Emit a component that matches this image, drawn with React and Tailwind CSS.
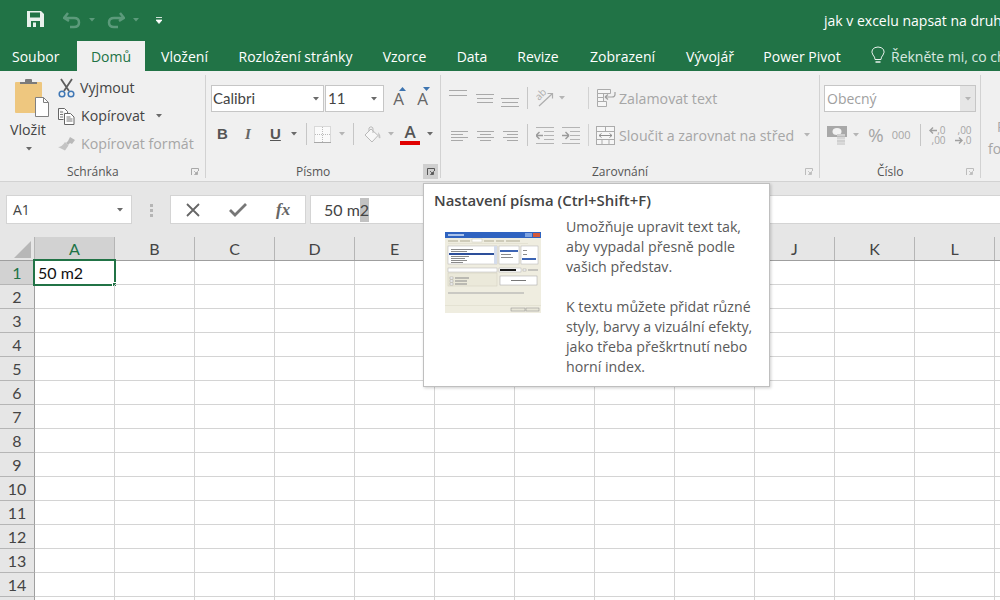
import React from 'react';

const TABS = [
    { label: 'Soubor', w: 'w-[77px]', pl: 'pl-[12px]' },
    { label: 'Domů', w: 'w-[68px]', active: true },
    { label: 'Vložení', w: 'w-[79px]' },
    { label: 'Rozložení stránky', w: 'w-[143px]' },
    { label: 'Vzorce', w: 'w-[75px]' },
    { label: 'Data', w: 'w-[60px]' },
    { label: 'Revize', w: 'w-[72px]' },
    { label: 'Zobrazení', w: 'w-[97px]' },
    { label: 'Vývojář', w: 'w-[78px]' },
    { label: 'Power Pivot', w: 'w-[106px]' },
];

const COLUMNS = ['A', 'B', 'C', 'D', 'E', 'F', 'G', 'H', 'I', 'J', 'K', 'L', 'M'];
const ROWS = [1, 2, 3, 4, 5, 6, 7, 8, 9, 10, 11, 12, 13, 14, 15];

const Caret = ({ color = '#6a6a6a', className = '' }) => (
    <svg width="6" height="4" viewBox="0 0 6 4" className={`shrink-0 ${className}`}>
        <path d="M0 0h6L3 3.5z" fill={color} />
    </svg>
);

const Lines = ({ rows, className = '', color = '#a9a9a9', w = 18 }) => (
    <svg width={w} height="18" viewBox={`0 0 ${w} 18`} className={`shrink-0 ${className}`}>
        {rows.map(([x, y, len], i) => (
            <rect key={i} x={x} y={y} width={len} height="1" fill={color} />
        ))}
    </svg>
);

const Launcher = ({ className = '', color = '#a8a8a8' }) => (
    <svg width="8" height="8" viewBox="0 0 8 8" className={`shrink-0 ${className}`}>
        <path d="M.5 7V.5H7.5V3" fill="none" stroke={color} />
        <path d="M3 3l3 3M6.5 3.5v3h-3z" fill={color} stroke={color} strokeWidth=".8" />
    </svg>
);

const Group = ({ width, label, labelPad, launcher, children }) => (
    <div className={`flex flex-col h-[103px] border-r border-[#d2d2d2] shrink-0 ${width}`}>
        <div className="h-[90px]">{children}</div>
        <div className={`h-[13px] flex items-center text-[12px] text-[#555] ${labelPad}`}>
            <span className="flex-1">{label}</span>
            {launcher}
        </div>
    </div>
);

const PasteIcon = () => (
    <svg width="36" height="40" viewBox="0 0 36 40" className="ml-[14px] mt-[3px] shrink-0">
        <rect x="1" y="4" width="27" height="31" rx="1" fill="#eec77f" />
        <path d="M6 6V4h5V2q0-1 1-1h5q1 0 1 1v2h5v2z" fill="#7b7b7b" />
        <path d="M21.5 19.5h8l5 5v14h-13z" fill="#fff" stroke="#808080" />
        <path d="M29.5 19.5v5h5" fill="none" stroke="#808080" />
    </svg>
);

const ScissorsIcon = () => (
    <svg width="17" height="20" viewBox="0 0 17 20" className="shrink-0">
        <path d="M3 1l8 12M14 1L6 13" stroke="#5d5d5d" strokeWidth="1.8" fill="none" />
        <circle cx="4" cy="16" r="2.8" fill="none" stroke="#3f77b5" strokeWidth="1.5" />
        <circle cx="13" cy="16" r="2.8" fill="none" stroke="#3f77b5" strokeWidth="1.5" />
    </svg>
);

const CopyIcon = () => (
    <svg width="17" height="17" viewBox="0 0 17 17" className="shrink-0">
        <path d="M.5.5h6l3 3v2M.5.5v11h5" fill="#fff" stroke="#666" />
        <path d="M6.5 5.5h6l3.5 3.5v7.5H6.5z" fill="#fff" stroke="#666" />
        <path d="M2 4h3M2 6.5h3M2 9h3M8.5 9h4M8.5 11h6M8.5 13h6" stroke="#777" />
    </svg>
);

const BrushIcon = () => (
    <svg width="18" height="16" viewBox="0 0 18 16" className="shrink-0">
        <path d="M12 1l5 3-3 4-2-1-2 2-2-2 2-2z" fill="#b9b9b9" />
        <path d="M7 6l3.5 3.5L7 14.5 0 11q4 0 7-5z" fill="#c4c4c4" />
    </svg>
);

const GrowFont = ({ up }) => (
    <div className="relative w-[13px] h-[20px] text-[17px] leading-[20px] text-[#666] text-center">
        A
        <svg width="7" height="4" viewBox="0 0 7 4" className="absolute -top-[2px] left-[7px]">
            <path d={up ? 'M0 4h7L3.5 0z' : 'M0 0h7L3.5 4z'} fill="#3d74b0" />
        </svg>
    </div>
);

const BordersIcon = () => (
    <svg width="17" height="17" viewBox="0 0 17 17" className="shrink-0">
        <rect x=".5" y=".5" width="16" height="16" fill="#fafafa" stroke="#bcbcbc" strokeDasharray="1 1" />
        <path d="M8.5 1v15M1 8.5h15" stroke="#bcbcbc" strokeDasharray="1 1" />
        <path d="M0 16.5h17" stroke="#a8a8a8" />
    </svg>
);

const FillIcon = () => (
    <svg width="17" height="17" viewBox="0 0 17 17" className="shrink-0">
        <path d="M1 9L7 3l7 6.500L8 16z" fill="#f7f7f7" stroke="#b9b9b9" />
        <path d="M5 5V2q1-1.500 3-1 1 .5 1 2v4" fill="none" stroke="#b9b9b9" />
        <path d="M14 6q3 3 2.500 6-1.500 1-2-1z" fill="#c4c4c4" />
    </svg>
);

const OrientIcon = () => (
    <svg width="18" height="18" viewBox="0 0 18 18" className="shrink-0">
        <text x="0" y="9" fontSize="10" fill="#aeaeae" transform="rotate(-45 5 7)">ab</text>
        <path d="M3 17L16 5M11.5 4.5h5v5" fill="none" stroke="#aeaeae" strokeWidth="1.2" />
    </svg>
);

const WrapIcon = () => (
    <svg width="19" height="19" viewBox="0 0 19 19" className="shrink-0">
        <path d="M.5.5h13v4h-13zM.5 4.5h6v4h-6zM.5 8.5h6v4h-6zM.5 12.500h9v5h-9z" fill="#f6f6f6" stroke="#ababab" />
        <path d="M8 8h7q3 0 3-2.500V3M8 8l3-2.500M8 8l3 2.500" fill="none" stroke="#a0a0a0" strokeWidth="1.2" />
    </svg>
);

const MergeIcon = () => (
    <svg width="19" height="19" viewBox="0 0 19 19" className="shrink-0">
        <rect x=".5" y=".5" width="18" height="18" fill="#f6f6f6" stroke="#ababab" />
        <path d="M.5 5.5h18M.5 13.5h18M9.5 1v4M6 14v4M13 14v4" stroke="#ababab" />
        <path d="M3 9.5h13M3 9.5l2.500-2M3 9.5l2.500 2M16 9.5l-2.500-2M16 9.5l-2.500 2" stroke="#8f8f8f" fill="none" />
    </svg>
);

const IndentIcon = ({ flip }) => (
    <svg width="18" height="17" viewBox="0 0 18 17" className="shrink-0">
        <path d="M0 .5h18M8 4.5h10M8 8.5h10M8 12.5h10M0 16.5h18" stroke="#b4b4b4" />
        {flip
            ? <path d="M0 8.5h7M7 8.5L3.500 5M7 8.5L3.500 12" stroke="#9a9a9a" strokeWidth="1.4" fill="none" />
            : <path d="M7 8.5H0M0 8.5L3.500 5M0 8.5L3.500 12" stroke="#9a9a9a" strokeWidth="1.4" fill="none" />}
    </svg>
);

const CurrencyIcon = () => (
    <svg width="20" height="19" viewBox="0 0 20 19" className="shrink-0">
        <rect x="0" y="0" width="20" height="11" fill="#a8a8a8" />
        <ellipse cx="10" cy="5.5" rx="4.5" ry="3.5" fill="#f2f2f2" />
        <rect x="10" y="8" width="8" height="2.5" fill="#cfcfcf" />
        <rect x="10" y="11" width="8" height="2.5" fill="#d6d6d6" />
        <rect x="10" y="14" width="8" height="2.5" fill="#cfcfcf" />
        <rect x="10" y="16.5" width="8" height="2.5" fill="#d6d6d6" />
    </svg>
);

const DecimalArrow = ({ left }) => (
    <svg width="8" height="7" viewBox="0 0 8 7" className="shrink-0">
        <path d={left ? 'M8 3.5H1M4 .5l-3 3 3 3' : 'M0 3.5h7M4 .5l3 3-3 3'} fill="none" stroke="#a0a0a0" strokeWidth="1.4" />
    </svg>
);

const DecimalIcon = ({ more }) => (
    <div className="w-[16px] text-[10px] leading-[10px] text-[#a6a6a6]">
        <div className="flex justify-end items-center">{more ? <><DecimalArrow left />,0</> : ',00'}</div>
        <div className="flex justify-end items-center">{more ? ',00' : <><DecimalArrow />,0</>}</div>
    </div>
);

const FontDialogThumb = () => (
    <svg width="96" height="81" viewBox="0 0 96 81" className="shrink-0 blur-[0.4px]">
        <rect width="96" height="81" fill="#efede0" />
        <rect width="96" height="6" fill="#2f63c0" />
        <rect x="3" y="2" width="16" height="2" fill="#a9c2ea" />
        <rect x="88" y="1" width="7" height="4" fill="#d5593b" />
        <rect x="80" y="1" width="7" height="4" fill="#7ea3e0" />
        <rect x="3" y="8" width="10" height="2" fill="#cfccba" />
        <rect x="15" y="8" width="10" height="2" fill="#cfccba" />
        <rect x="27" y="7" width="10" height="3" fill="#fff" stroke="#c8c5b4" strokeWidth=".5" />
        <rect x="39" y="8" width="10" height="2" fill="#cfccba" />
        <rect x="51" y="8" width="8" height="2" fill="#cfccba" />
        <rect x="61" y="8" width="14" height="2" fill="#cfccba" />
        <rect x="3" y="11.5" width="80" height=".5" fill="#d8d6c6" />
        <rect x="3" y="14" width="49" height="18" fill="#fff" stroke="#b0b0b0" strokeWidth=".5" />
        <rect x="4" y="21" width="46" height="2" fill="#2d4f9a" />
        <rect x="6" y="17" width="22" height="1" fill="#8a8a8a" />
        <rect x="6" y="19" width="16" height="1" fill="#8a8a8a" />
        <rect x="6" y="24" width="18" height="1" fill="#8a8a8a" />
        <rect x="6" y="26" width="14" height="1" fill="#8a8a8a" />
        <rect x="6" y="28" width="16" height="1" fill="#8a8a8a" />
        <rect x="6" y="30" width="12" height="1" fill="#8a8a8a" />
        <rect x="49" y="14" width="3" height="18" fill="#d4dcec" />
        <rect x="54" y="14" width="20" height="18" fill="#fff" stroke="#b0b0b0" strokeWidth=".5" />
        <rect x="55" y="18" width="18" height="2" fill="#3c64b4" />
        <rect x="56" y="22" width="10" height="1" fill="#8a8a8a" />
        <rect x="56" y="25" width="12" height="1" fill="#8a8a8a" />
        <rect x="76" y="14" width="17" height="18" fill="#fff" stroke="#b0b0b0" strokeWidth=".5" />
        <rect x="77" y="26" width="14" height="2" fill="#3c64b4" />
        <rect x="78" y="18" width="4" height="1" fill="#8a8a8a" />
        <rect x="78" y="22" width="4" height="1" fill="#8a8a8a" />
        <rect x="3" y="36" width="49" height="4" fill="#fff" stroke="#b0b0b0" strokeWidth=".5" />
        <rect x="54" y="36" width="22" height="4" fill="#fff" stroke="#b0b0b0" strokeWidth=".5" />
        <rect x="55" y="37" width="16" height="2" fill="#1a1a1a" />
        <rect x="78" y="37" width="3" height="2" fill="#fff" stroke="#888" strokeWidth=".4" />
        <rect x="83" y="37.5" width="10" height="1" fill="#999" />
        <rect x="3" y="41" width="49" height="13" fill="#ebe9da" stroke="#d0cebd" strokeWidth=".5" />
        <rect x="5" y="45" width="3" height="2" fill="#fff" stroke="#888" strokeWidth=".4" />
        <rect x="5" y="48" width="3" height="2" fill="#fff" stroke="#888" strokeWidth=".4" />
        <rect x="5" y="51" width="3" height="2" fill="#fff" stroke="#888" strokeWidth=".4" />
        <rect x="10" y="45.5" width="14" height="1" fill="#8a8a8a" />
        <rect x="10" y="48.5" width="12" height="1" fill="#8a8a8a" />
        <rect x="10" y="51.5" width="12" height="1" fill="#8a8a8a" />
        <rect x="55" y="44" width="37" height="9" fill="#fff" stroke="#a0a0a0" strokeWidth=".5" />
        <rect x="66" y="48" width="15" height="1" fill="#777" />
        <rect x="3" y="60.5" width="76" height="1" fill="#a5a5a5" />
        <rect x="0" y="73" width="96" height=".5" fill="#d8d6c6" />
        <rect x="66" y="76" width="14" height="3" fill="#e8e6d8" stroke="#888" strokeWidth=".5" />
        <rect x="81" y="76" width="13" height="3" fill="#e8e6d8" stroke="#888" strokeWidth=".5" />
    </svg>
);

const App = () => {
    return (
        <div className="relative w-[1000px] h-[600px] overflow-hidden bg-white font-['Open_Sans',sans-serif] text-[#444]">
            {/* title bar */}
            <div className="h-[41px] bg-[#217346] flex items-center relative">
                <svg width="17" height="16" viewBox="0 0 17 16" className="ml-[27px] mb-[3px] shrink-0">
                    <path d="M0 0h14l3 3v13H0z" fill="#e8f1ec" />
                    <rect x="3" y="1.5" width="10" height="5" fill="#217346" />
                    <rect x="4" y="10" width="9" height="6" fill="#217346" />
                    <rect x="6" y="11.5" width="3" height="4.5" fill="#e8f1ec" />
                </svg>
                <svg width="18" height="17" viewBox="0 0 18 17" className="ml-[19px] mb-[1px] shrink-0">
                    <path d="M5 1L1 6l5 3M1.5 6H11q5 0 5 4.500T11 15H7" fill="none" stroke="#5c9a7b" strokeWidth="2.5" />
                </svg>
                <Caret color="#5c9a7b" className="ml-[8px] mb-[1px]" />
                <svg width="18" height="17" viewBox="0 0 18 17" className="ml-[12px] mb-[1px] shrink-0">
                    <path d="M13 1l4 5-5 3M16.5 6H7Q2 6 2 10.500T7 15h4" fill="none" stroke="#5c9a7b" strokeWidth="2.5" />
                </svg>
                <Caret color="#5c9a7b" className="ml-[8px] mb-[1px]" />
                <svg width="6" height="7" viewBox="0 0 6 7" className="ml-[17px] shrink-0">
                    <path d="M0 .5h6M0 3h6L3 6.5 0 3z" fill="#fff" stroke="#fff" strokeWidth=".8" />
                </svg>
                <div className="ml-[662px] text-[14px] whitespace-nowrap text-white mb-[1px]">jak v excelu napsat na druhou</div>
            </div>

            {/* tabs */}
            <div className="h-[30px] bg-[#217346] flex text-white text-[14px] whitespace-nowrap">
                {TABS.map((tab) => (
                    <div
                        key={tab.label}
                        className={`${tab.w} shrink-0 flex items-center ${tab.pl ? tab.pl : 'justify-center'} ${tab.active ? 'bg-[#f0f0f0] text-[#217346]' : ''}`}
                    >
                        {tab.label}
                    </div>
                ))}
                <svg width="16" height="20" viewBox="0 0 16 20" className="ml-[15px] mt-[5px] shrink-0">
                    <path d="M5 13.5Q5 11 3 9 1 6 2.5 3.5 4.5 1 8 1t5.500 2.500Q15 6 13 9q-2 2-2 4.500z" fill="none" stroke="#e8f1ec" />
                    <path d="M5.5 16h5" stroke="#e8f1ec" strokeWidth="1.5" />
                </svg>
                <div className="ml-[5px] text-[#d9e8e0] flex items-center">Řekněte mi, co chcete udělat</div>
            </div>

            {/* ribbon */}
            <div className="h-[111px] bg-[#f0f0f0] border-b border-[#d2d2d2] pt-[4px] flex">
                <Group
                    width="w-[206px]"
                    label="Schránka"
                    labelPad="pl-[67px] pr-[6px]"
                    launcher={<Launcher />}
                >
                    <div className="flex">
                        <div className="w-[58px] flex flex-col">
                            <PasteIcon />
                            <div className="text-[14.2px] leading-[20px] ml-[10px] mt-[2px]">Vložit</div>
                            <Caret className="ml-[26px] mt-[7px]" />
                        </div>
                        <div className="flex flex-col -mt-[1px] text-[14.2px] whitespace-nowrap">
                            <div className="h-[28px] flex items-center gap-[5px]"><ScissorsIcon />Vyjmout</div>
                            <div className="h-[28px] flex items-center gap-[6px]"><CopyIcon />Kopírovat<Caret className="ml-[5px]" /></div>
                            <div className="h-[28px] flex items-center gap-[5px] text-[#a6a6a6]"><BrushIcon />Kopírovat formát</div>
                        </div>
                    </div>
                </Group>

                <Group
                    width="w-[235px]"
                    label="Písmo"
                    labelPad="pl-[90px] pr-[2px]"
                    launcher={<div className="w-[15px] h-[15px] bg-[#cfcfcf] flex items-center justify-center"><Launcher color="#555" /></div>}
                >
                    <div className="flex items-center mt-[10px] h-[27px] pl-[5px]">
                        <div className="w-[113px] h-[27px] bg-white border border-[#c6c6c6] flex items-center px-[1px] font-['Lato',sans-serif] text-[15px]">
                            <span className="flex-1">Calibri</span><Caret className="mr-[3px]" />
                        </div>
                        <div className="w-[59px] h-[27px] bg-white border border-[#c6c6c6] ml-[1px] flex items-center px-[2px] font-['Lato',sans-serif] text-[15px]">
                            <span className="flex-1">11</span><Caret className="mr-[4px]" />
                        </div>
                        <div className="ml-[8px]"><GrowFont up /></div>
                        <div className="ml-[11px]"><GrowFont /></div>
                    </div>
                    <div className="flex items-center mt-[10px] h-[24px] text-[#555]">
                        <span className="ml-[11px] w-[11px] font-bold text-[15px] font-['Liberation_Sans',sans-serif]">B</span>
                        <span className="ml-[17px] w-[11px] italic font-bold text-[15px] font-['Liberation_Serif',serif] text-[#666]">I</span>
                        <span className="ml-[14px] w-[12px] font-bold text-[15px] underline font-['Liberation_Sans',sans-serif]">U</span>
                        <Caret className="ml-[9px]" />
                        <div className="ml-[9px] w-px h-[22px] bg-[#c6c6c6]" />
                        <div className="ml-[7px]"><BordersIcon /></div>
                        <Caret color="#b5b5b5" className="ml-[8px]" />
                        <div className="ml-[8px] w-px h-[22px] bg-[#c6c6c6]" />
                        <div className="ml-[10px]"><FillIcon /></div>
                        <Caret color="#b5b5b5" className="ml-[7px]" />
                        <div className="ml-[6px] w-[20px] flex flex-col items-center">
                            <span className="text-[17px] leading-[16px] font-semibold text-[#555]">A</span>
                            <div className="w-[20px] h-[4px] bg-[#e00000] mt-[1px]" />
                        </div>
                        <Caret className="ml-[7px]" />
                    </div>
                </Group>

                <Group
                    width="w-[379px]"
                    label="Zarovnání"
                    labelPad="pl-[151px] pr-[6px]"
                    launcher={<Launcher color="#bcbcbc" />}
                >
                    <div className="flex items-center mt-[11px] h-[24px] text-[#a6a6a6] text-[14.2px] whitespace-nowrap">
                        <Lines className="ml-[8px]" rows={[[0, 1, 18], [0, 6, 18]]} />
                        <Lines className="ml-[9px]" rows={[[0, 5, 18], [1, 9, 16], [1, 13, 16]]} />
                        <Lines className="ml-[7px]" rows={[[0, 9, 18], [1, 13, 16], [0, 17, 18]]} />
                        <div className="ml-[8px] w-px h-[22px] bg-[#c6c6c6]" />
                        <div className="ml-[8px]"><OrientIcon /></div>
                        <Caret color="#b5b5b5" className="ml-[5px]" />
                        <div className="ml-[23px] w-px h-[22px] bg-[#d2d2d2]" />
                        <div className="ml-[8px]"><WrapIcon /></div>
                        <span className="ml-[3px] mt-[2px]">Zalamovat text</span>
                    </div>
                    <div className="flex items-center mt-[13px] h-[24px] text-[#a6a6a6] text-[14.2px] whitespace-nowrap">
                        <Lines className="ml-[10px]" rows={[[0, 5, 17], [0, 8, 12], [0, 11, 17], [0, 14, 12]]} />
                        <Lines className="ml-[8px]" rows={[[0, 5, 17], [3, 8, 11], [0, 11, 17], [3, 14, 11]]} />
                        <Lines className="ml-[8px]" rows={[[0, 5, 15], [4, 8, 11], [0, 11, 15], [4, 14, 11]]} />
                        <div className="ml-[6px] w-px h-[22px] bg-[#c6c6c6]" />
                        <div className="ml-[8px]"><IndentIcon /></div>
                        <div className="ml-[8px]"><IndentIcon flip /></div>
                        <div className="ml-[8px] w-px h-[22px] bg-[#d2d2d2]" />
                        <div className="ml-[7px]"><MergeIcon /></div>
                        <span className="ml-[4px] mt-[1px]">Sloučit a zarovnat na střed</span>
                        <Caret color="#b5b5b5" className="ml-[10px]" />
                    </div>
                </Group>

                <Group
                    width="w-[161px]"
                    label="Číslo"
                    labelPad="pl-[57px] pr-[6px]"
                    launcher={<Launcher color="#bcbcbc" />}
                >
                    <div className="flex items-center mt-[10px] h-[27px] pl-[4px]">
                        <div className="w-[152px] h-[27px] bg-white border border-[#c6c6c6] flex items-center justify-between pl-[2px] text-[14px] text-[#a0a0a0]">
                            Obecný
                            <div className="w-[15px] h-full bg-[#e6e6e6] flex items-center justify-center"><Caret color="#b5b5b5" /></div>
                        </div>
                    </div>
                    <div className="flex items-center mt-[11px] h-[24px] text-[#a6a6a6]">
                        <div className="ml-[7px]"><CurrencyIcon /></div>
                        <Caret color="#b5b5b5" className="ml-[6px]" />
                        <span className="ml-[9px] text-[19px]">%</span>
                        <span className="ml-[8px] text-[11px]">000</span>
                        <div className="ml-[9px] w-px h-[22px] bg-[#c6c6c6]" />
                        <div className="ml-[9px]"><DecimalIcon more /></div>
                        <div className="ml-[10px]"><DecimalIcon /></div>
                    </div>
                </Group>

                <div className="ml-[7px] mt-[41px] text-[14px] leading-[22px] text-[#a6a6a6] whitespace-nowrap">
                    <div className="ml-[9px]">P</div>
                    <div>fo</div>
                </div>
            </div>

            {/* formula bar */}
            <div className="h-[55px] bg-[#e6e6e6] flex pt-[13px]">
                <div className="ml-[6px] w-[126px] h-[29px] bg-white border border-[#d4d4d4] flex items-center pl-[6px] pr-[8px] text-[14px]">
                    <span className="flex-1">A1</span>
                    <Caret />
                </div>
                <div className="ml-[18px] mt-[9px] flex flex-col gap-[2px] w-[3px]">
                    <div className="h-[3px] bg-[#b5b5b5]" />
                    <div className="h-[3px] bg-[#b5b5b5]" />
                    <div className="h-[3px] bg-[#b5b5b5]" />
                </div>
                <div className="ml-[17px] w-[136px] h-[29px] bg-white border border-[#d4d4d4] flex items-center">
                    <svg width="16" height="16" viewBox="0 0 16 16" className="ml-[14px] shrink-0">
                        <path d="M2 2l12 12M14 2L2 14" stroke="#666" strokeWidth="1.8" />
                    </svg>
                    <svg width="18" height="15" viewBox="0 0 18 15" className="ml-[28px] shrink-0">
                        <path d="M1 8l5 5L17 2" fill="none" stroke="#777" strokeWidth="2.8" />
                    </svg>
                    <span className="ml-[29px] text-[17px] italic font-['Liberation_Serif',serif] text-[#666] font-bold">fx</span>
                </div>
                <div className="ml-[4px] flex-1 h-[29px] bg-white border border-[#d4d4d4] border-r-0 flex items-center pl-[13px] text-[16px] font-['Lato',sans-serif]">
                    50 m<span className="bg-[#c2c2c2] leading-[24px]">2</span>
                </div>
            </div>

            {/* column headers */}
            <div className="flex h-[24px] bg-[#e6e6e6] border-b border-[#9f9f9f]">
                <div className="w-[35px] shrink-0 border-r border-[#b5b5b5]">
                    <svg width="17" height="17" viewBox="0 0 17 17" className="ml-[14px] mt-[4px]">
                        <path d="M17 0v17H0z" fill="#b7b7b7" />
                    </svg>
                </div>
                {COLUMNS.map((col, i) => (
                    <div
                        key={col}
                        className={`w-[80px] shrink-0 flex items-center justify-center border-r border-[#b5b5b5] text-[16px] font-['Lato',sans-serif] ${i === 0 ? 'bg-[#d2d2d2] text-[#217346]' : ''}`}
                    >
                        {col}
                    </div>
                ))}
            </div>

            {/* grid */}
            {ROWS.map((row) => (
                <div key={row} className="flex h-[24px]">
                    <div className={`w-[35px] shrink-0 flex items-center justify-center border-r border-b border-r-[#9f9f9f] border-b-[#b5b5b5] text-[16px] font-['Lato',sans-serif] ${row === 1 ? 'bg-[#d2d2d2] text-[#217346]' : 'bg-[#e6e6e6]'}`}>
                        {row}
                    </div>
                    {COLUMNS.map((col) => (
                        <div key={col} className="relative w-[80px] shrink-0 border-r border-b border-[#d4d4d4] flex items-center pl-[3px] text-[16px] text-[#111] font-['Lato',sans-serif]">
                            {row === 1 && col === 'A' && (
                                <>
                                    50 m2
                                    <div className="absolute -left-[2px] -top-[2px] w-[83px] h-[27px] border-2 border-[#217346]" />
                                    <div className="absolute -right-[3px] -bottom-[3px] w-[5px] h-[5px] bg-[#217346] border border-white" />
                                </>
                            )}
                        </div>
                    ))}
                </div>
            ))}

            {/* tooltip */}
            <div className="absolute left-[423px] top-[183px] w-[347px] h-[204px] bg-white border border-[#bfbfbf] shadow-[1px_1px_3px_rgba(0,0,0,0.2)] text-[#5a5a5a]">
                <div className="pl-[10px] pt-[5px] text-[14.9px] leading-[22px] font-semibold text-[#444] whitespace-nowrap">
                    Nastavení písma (Ctrl+Shift+F)
                </div>
                <div className="flex pl-[21px] pt-[21px]">
                    <FontDialogThumb />
                </div>
                <div className="absolute left-[142px] top-[33px] text-[14.2px] leading-[20px] whitespace-nowrap">
                    <div>Umožňuje upravit text tak,</div>
                    <div>aby vypadal přesně podle</div>
                    <div>vašich představ.</div>
                    <div className="mt-[20px]">K textu můžete přidat různé</div>
                    <div>styly, barvy a vizuální efekty,</div>
                    <div>jako třeba přeškrtnutí nebo</div>
                    <div>horní index.</div>
                </div>
            </div>
        </div>
    );
};

export default App;
